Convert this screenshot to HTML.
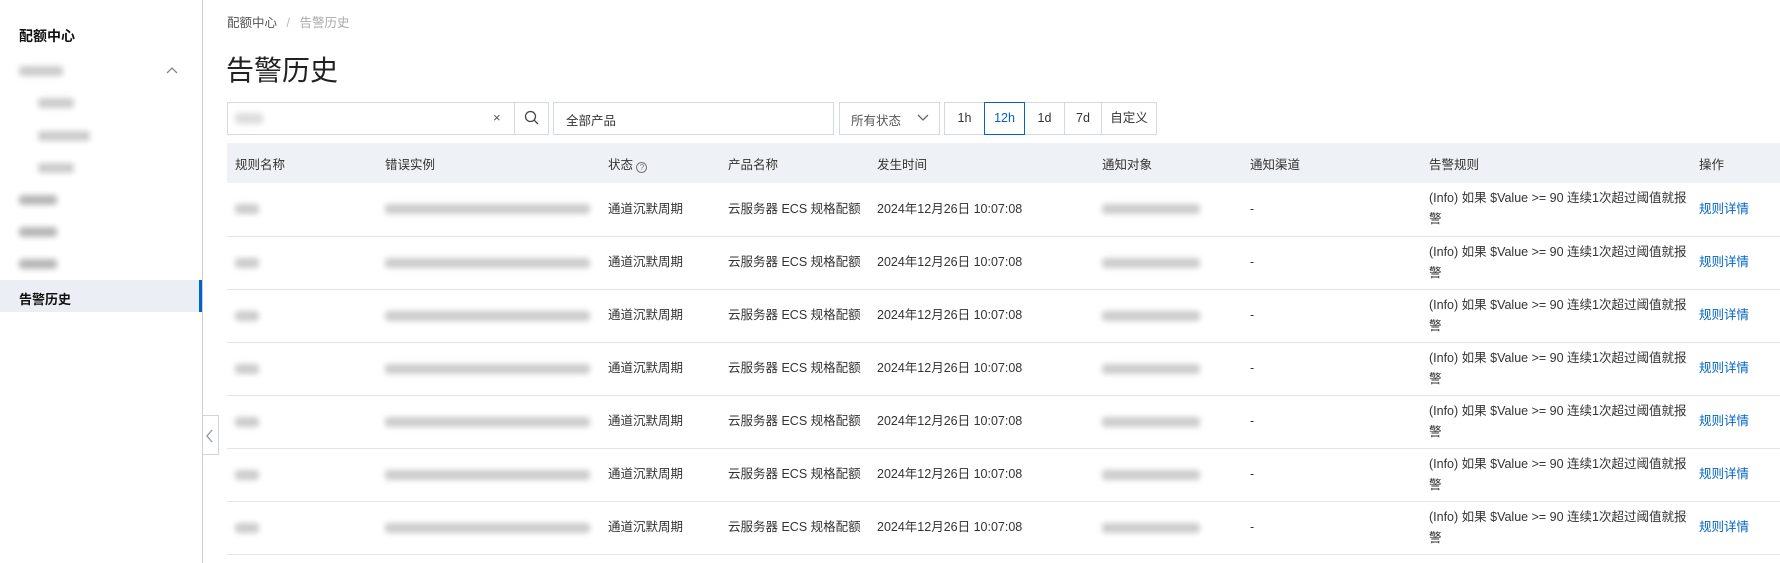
<!DOCTYPE html>
<html><head><meta charset="utf-8"><style>
*{box-sizing:border-box;margin:0;padding:0}
body{width:1780px;height:563px;overflow:hidden;background:#fff;font-family:"Liberation Sans","Noto Sans CJK SC",sans-serif;color:#333;font-size:12px;position:relative}
.side{position:absolute;left:0;top:0;width:203px;height:563px;background:#fff;border-right:1px solid #c9ced8}
.abs{position:absolute}
.blur{position:absolute;background:#999;filter:blur(3px);opacity:.5;border-radius:3px}
.tab{position:absolute;left:203px;top:415px;width:16px;height:40px;border:1px solid #d0d4dc;border-left:none;background:#fff}
.inp{position:absolute;top:102px;height:33px;border:1px solid #d4d8df;background:#fff}
table{position:absolute;left:227px;top:143px;border-collapse:collapse;table-layout:fixed;width:1553px}
th{background:#eef1f5;height:40px;font-weight:normal;text-align:left;padding-left:8px;color:#333;font-size:12.5px}
td{height:53px;border-bottom:1px solid #e3e5e9;padding-left:8px;line-height:21px;position:relative;font-size:12.5px;white-space:nowrap}
a{color:#0064c8;text-decoration:none}
.tb{position:absolute;top:102px;height:33px;border:1px solid #d4d8df;text-align:center;line-height:31px;font-size:12.5px;color:#333;background:#fff}
</style></head><body>
<div class="side">
 <div class="abs" style="left:19px;top:26px;font-size:14px;font-weight:bold;color:#111">配额中心</div>
 <div class="blur" style="left:19px;top:66px;width:44px;height:10px"></div>
 <svg class="abs" style="left:166px;top:66px" width="12" height="8"><path d="M1 7 L6 2 L11 7" fill="none" stroke="#888" stroke-width="1.3"/></svg>
 <div class="blur" style="left:38px;top:98px;width:36px;height:10px"></div>
 <div class="blur" style="left:38px;top:131px;width:52px;height:10px"></div>
 <div class="blur" style="left:38px;top:163px;width:36px;height:10px"></div>
 <div class="blur" style="left:19px;top:195px;width:38px;height:10px;opacity:.7"></div>
 <div class="blur" style="left:19px;top:227px;width:38px;height:10px;opacity:.7"></div>
 <div class="blur" style="left:19px;top:259px;width:38px;height:10px;opacity:.7"></div>
 <div class="abs" style="left:0;top:280px;width:202px;height:32px;background:#ebeff5;border-right:3px solid #0064c8"></div>
 <div class="abs" style="left:19px;top:289px;font-size:13px;font-weight:bold;color:#111">告警历史</div>
</div>
<div class="tab"><svg width="15" height="40"><path d="M9 14 L4 20 L9 26" fill="none" stroke="#8a94a6" stroke-width="1.3"/></svg></div>
<div class="abs" style="left:227px;top:12px;font-size:12.5px;color:#555">配额中心 <span style="color:#bbb;margin:0 6px">/</span> <span style="color:#aaa">告警历史</span></div>
<div class="abs" style="left:226px;top:49px;font-size:28px;color:#222">告警历史</div>
<div class="inp" style="left:227px;width:322px"></div>
<div class="blur" style="left:235px;top:113px;width:28px;height:11px;background:#bbb"></div>
<div class="abs" style="left:493px;top:110px;font-size:13px;color:#555">×</div>
<div class="abs" style="left:514px;top:103px;width:1px;height:31px;background:#d4d8df"></div>
<svg class="abs" style="left:524px;top:110px" width="16" height="16"><circle cx="6.5" cy="6.5" r="5" fill="none" stroke="#444" stroke-width="1.3"/><path d="M10.3 10.3 L14 14" stroke="#444" stroke-width="1.3"/></svg>
<div class="inp" style="left:553px;width:281px"></div>
<div class="abs" style="left:566px;top:110px;color:#333;font-size:12.5px">全部产品</div>
<div class="inp" style="left:839px;width:101px"></div>
<div class="abs" style="left:851px;top:110px;color:#555;font-size:12.5px">所有状态</div>
<svg class="abs" style="left:917px;top:114px" width="12" height="8"><path d="M1 1 L6 6 L11 1" fill="none" stroke="#666" stroke-width="1.3"/></svg>
<div class="tb" style="left:944px;width:41px">1h</div>
<div class="tb" style="left:1064px;width:38px">7d</div>
<div class="tb" style="left:1101px;width:56px">自定义</div>
<div class="tb" style="left:1024px;width:41px">1d</div>
<div class="tb" style="left:984px;width:41px;border-color:#0064c8;color:#0064c8;z-index:2">12h</div>
<table>
<colgroup><col style="width:150px"><col style="width:223px"><col style="width:120px"><col style="width:149px"><col style="width:225px"><col style="width:148px"><col style="width:179px"><col style="width:270px"><col style="width:89px"></colgroup>
<tr><th>规则名称</th><th>错误实例</th><th>状态 <span style="display:inline-block;width:11px;height:11px;border:1px solid #777;border-radius:50%;font-size:8px;line-height:9px;text-align:center;color:#777;vertical-align:-1px">?</span></th><th>产品名称</th><th>发生时间</th><th>通知对象</th><th>通知渠道</th><th>告警规则</th><th>操作</th></tr>
<tr><td><div class="blur" style="left:8px;top:21px;width:24px;height:10px;position:absolute"></div></td><td><div class="blur" style="left:8px;top:21px;width:205px;height:10px;position:absolute"></div></td><td>通道沉默周期</td><td>云服务器 ECS 规格配额</td><td>2024年12月26日 10:07:08</td><td><div class="blur" style="left:8px;top:21px;width:98px;height:10px;position:absolute"></div></td><td>-</td><td>(Info) 如果 $Value &gt;= 90 连续1次超过阈值就报<br>警</td><td><a>规则详情</a></td></tr>
<tr><td><div class="blur" style="left:8px;top:21px;width:24px;height:10px;position:absolute"></div></td><td><div class="blur" style="left:8px;top:21px;width:205px;height:10px;position:absolute"></div></td><td>通道沉默周期</td><td>云服务器 ECS 规格配额</td><td>2024年12月26日 10:07:08</td><td><div class="blur" style="left:8px;top:21px;width:98px;height:10px;position:absolute"></div></td><td>-</td><td>(Info) 如果 $Value &gt;= 90 连续1次超过阈值就报<br>警</td><td><a>规则详情</a></td></tr>
<tr><td><div class="blur" style="left:8px;top:21px;width:24px;height:10px;position:absolute"></div></td><td><div class="blur" style="left:8px;top:21px;width:205px;height:10px;position:absolute"></div></td><td>通道沉默周期</td><td>云服务器 ECS 规格配额</td><td>2024年12月26日 10:07:08</td><td><div class="blur" style="left:8px;top:21px;width:98px;height:10px;position:absolute"></div></td><td>-</td><td>(Info) 如果 $Value &gt;= 90 连续1次超过阈值就报<br>警</td><td><a>规则详情</a></td></tr>
<tr><td><div class="blur" style="left:8px;top:21px;width:24px;height:10px;position:absolute"></div></td><td><div class="blur" style="left:8px;top:21px;width:205px;height:10px;position:absolute"></div></td><td>通道沉默周期</td><td>云服务器 ECS 规格配额</td><td>2024年12月26日 10:07:08</td><td><div class="blur" style="left:8px;top:21px;width:98px;height:10px;position:absolute"></div></td><td>-</td><td>(Info) 如果 $Value &gt;= 90 连续1次超过阈值就报<br>警</td><td><a>规则详情</a></td></tr>
<tr><td><div class="blur" style="left:8px;top:21px;width:24px;height:10px;position:absolute"></div></td><td><div class="blur" style="left:8px;top:21px;width:205px;height:10px;position:absolute"></div></td><td>通道沉默周期</td><td>云服务器 ECS 规格配额</td><td>2024年12月26日 10:07:08</td><td><div class="blur" style="left:8px;top:21px;width:98px;height:10px;position:absolute"></div></td><td>-</td><td>(Info) 如果 $Value &gt;= 90 连续1次超过阈值就报<br>警</td><td><a>规则详情</a></td></tr>
<tr><td><div class="blur" style="left:8px;top:21px;width:24px;height:10px;position:absolute"></div></td><td><div class="blur" style="left:8px;top:21px;width:205px;height:10px;position:absolute"></div></td><td>通道沉默周期</td><td>云服务器 ECS 规格配额</td><td>2024年12月26日 10:07:08</td><td><div class="blur" style="left:8px;top:21px;width:98px;height:10px;position:absolute"></div></td><td>-</td><td>(Info) 如果 $Value &gt;= 90 连续1次超过阈值就报<br>警</td><td><a>规则详情</a></td></tr>
<tr><td><div class="blur" style="left:8px;top:21px;width:24px;height:10px;position:absolute"></div></td><td><div class="blur" style="left:8px;top:21px;width:205px;height:10px;position:absolute"></div></td><td>通道沉默周期</td><td>云服务器 ECS 规格配额</td><td>2024年12月26日 10:07:08</td><td><div class="blur" style="left:8px;top:21px;width:98px;height:10px;position:absolute"></div></td><td>-</td><td>(Info) 如果 $Value &gt;= 90 连续1次超过阈值就报<br>警</td><td><a>规则详情</a></td></tr>
</table>
</body></html>
